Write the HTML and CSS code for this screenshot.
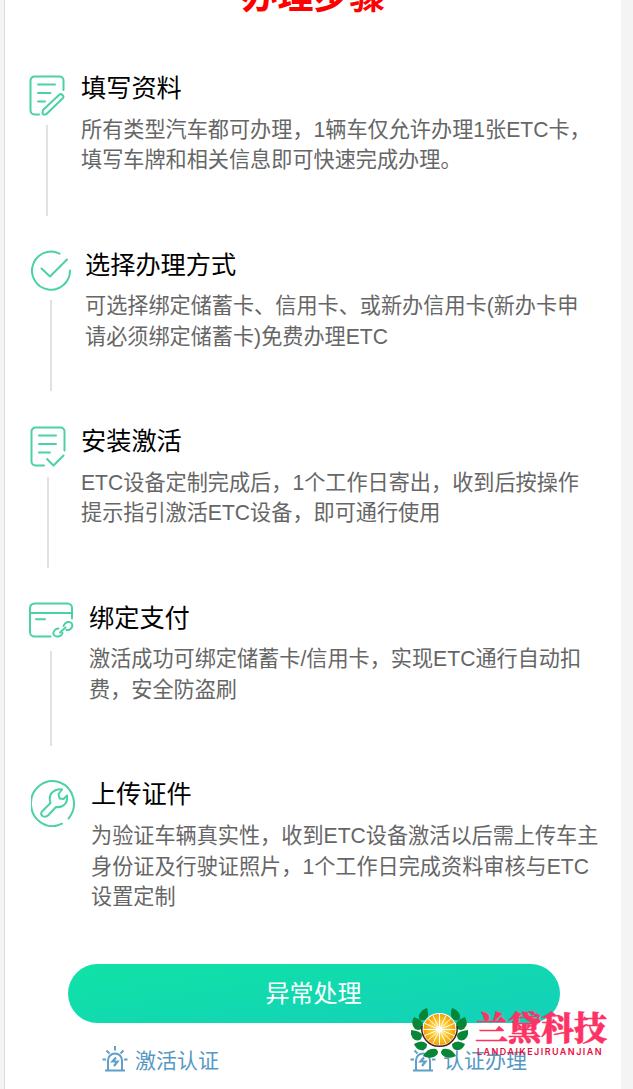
FILE: index.html
```html
<!DOCTYPE html>
<html lang="zh-CN">
<head>
<meta charset="utf-8">
<title>办理步骤</title>
<link rel="stylesheet" href="styles.css">
</head>
<body>
<main class="page">
  <h1 class="heading">办理步骤</h1>
  <section class="steps">
    <article class="step">
      <div class="marker marker-form">
        <svg class="icon" width="36" height="42" viewBox="0 0 36 42"><path d="M34.500 15V5.500a4 4 0 0 0-4-4h-25a4 4 0 0 0-4 4v30a4 4 0 0 0 4 4H10M9 9.500h17M9 18h12.500M9 26.500h7M14 35 30.500 19.500q1.500-1 3 .5t.5 3L17.500 39q-4 1.500-4-1z"/></svg>
        <span class="line"></span>
      </div>
      <div class="copy"><h2 class="title">填写资料</h2><p class="desc">所有类型汽车都可办理，1辆车仅允许办理1张ETC卡，<br>填写车牌和相关信息即可快速完成办理。</p></div>
    </article>
    <article class="step">
      <div class="marker marker-check">
        <svg class="icon" width="40" height="42" viewBox="0 0 40 42"><path d="M28.500 3.700A19 19 0 1 0 39 20.500M10.500 18.500l8.500 8 17-17"/></svg>
        <span class="line"></span>
      </div>
      <div class="copy"><h2 class="title">选择办理方式</h2><p class="desc">可选择绑定储蓄卡、信用卡、或新办信用卡(新办卡申<br>请必须绑定储蓄卡)免费办理ETC</p></div>
    </article>
    <article class="step">
      <div class="marker marker-done">
        <svg class="icon" width="36" height="42" viewBox="0 0 36 42"><path d="M34.500 24.500v-19a4 4 0 0 0-4-4h-25a4 4 0 0 0-4 4v30a4 4 0 0 0 4 4H14M9 9.500h17M9 18h17M9 26.500h11M17 33l6.500 6.500L33.500 29.500"/></svg>
        <span class="line"></span>
      </div>
      <div class="copy"><h2 class="title">安装激活</h2><p class="desc">ETC设备定制完成后，1个工作日寄出，收到后按操作<br>提示指引激活ETC设备，即可通行使用</p></div>
    </article>
    <article class="step">
      <div class="marker marker-card">
        <svg class="icon" width="46" height="38" viewBox="0 0 46 38"><path d="M44 16.500V6a4.500 4.500 0 0 0-4.500-4.500h-33A4.500 4.500 0 0 0 2 6v24A4.500 4.500 0 0 0 6.500 34.500H22.500M2 11h42M8 17.300h9M30.500 26.500q-2.500 0-4 2-2 2.500-.5 4.500t4.500 1.500q3-.500 4-3.500M35.500 24q1-3 4-4 3.500-.500 4.500 2t-1 4.500q-2 2-4.500 1.500M32 30.500l5.500-5"/></svg>
        <span class="line"></span>
      </div>
      <div class="copy"><h2 class="title">绑定支付</h2><p class="desc">激活成功可绑定储蓄卡/信用卡，实现ETC通行自动扣<br>费，安全防盗刷</p></div>
    </article>
    <article class="step">
      <div class="marker marker-tool">
        <svg class="icon" width="46" height="48" viewBox="0 0 46 48"><path d="M31 44.700A21.500 22.500 0 1 1 37.500 39.500M11 32.500 19.500 24Q16.500 14.500 25 11q3.500-1.200 6-.500L27.500 15l1 4.500 4 .5 3.500-3.500q1 7.500-4.500 10.500-3 1.500-6.500 1L17.500 36q-3 3-6 1-2.500-2-.500-4.500"/></svg>
      </div>
      <div class="copy"><h2 class="title">上传证件</h2><p class="desc">为验证车辆真实性，收到ETC设备激活以后需上传车主<br>身份证及行驶证照片，1个工作日完成资料审核与ETC<br>设置定制</p></div>
    </article>
  </section>
  <button class="action">异常处理</button>
  <nav class="links">
    <a class="link"><svg class="siren" width="26" height="26" viewBox="0 0 26 26"><path d="M3 24.500h20M6 24V14.500a7 7 0 0 1 14 0V24M13 0v4.500M4.500 4.500l3 3M21.500 4.500l-3 3M.5 13.500H4M22 13.500h3.500"/><path class="bolt" d="M14 11.500l-3.500 4h5L12 20"/></svg>激活认证</a>
    <a class="link"><svg class="siren" width="26" height="26" viewBox="0 0 26 26"><path d="M3 24.500h20M6 24V14.500a7 7 0 0 1 14 0V24M13 0v4.500M4.500 4.500l3 3M21.500 4.500l-3 3M.5 13.500H4M22 13.500h3.500"/><path class="bolt" d="M14 11.500l-3.500 4h5L12 20"/></svg>认证办理</a>
  </nav>
</main>
<aside class="brand">
  <svg class="emblem" width="58" height="52" viewBox="0 0 58 52">
    <defs>
      <radialGradient id="pulp"><stop offset="0" stop-color="#ffe36b"/><stop offset=".6" stop-color="#fdc52c"/><stop offset="1" stop-color="#f2a000"/></radialGradient>
      <g id="leaves" fill="#078637"><path d="M16 1q3 9-2 12-7 2-6-5 2-5 8-7z"/><path d="M3 10q9 3 9 8-1 7-8 4-5-5-1-12z"/><path d="M0 23q10 1 11 5 0 7-7 5-5-3-4-10z"/><path d="M3 37q8-5 13 0 0 7-7 6-4-1-6-6z"/><path d="M12 49q5-9 13-7 5 4-2 8-6 2-11-1z"/></g>
    </defs>
    <use href="#leaves"/><use href="#leaves" transform="matrix(-1 0 0 1 57 0)"/>
    <circle cx="28.500" cy="23.500" r="17.500" fill="#fff"/>
    <path d="M11 19a17.700 17.700 0 1 0 35 0" fill="none" stroke="#482113" stroke-width="1.500"/>
    <ellipse cx="28.500" cy="22.500" rx="16" ry="15.500" fill="url(#pulp)"/>
    <path d="M28.500 7v31M12.500 22.500h32M17 11.500l23 22M40 11.500l-23 22M22 8.500l13 28M35 8.500l-13 28M14 16.500l29 12M43 16.500l-29 12" stroke="#fff" stroke-width="1"/>
    <circle cx="28.500" cy="22.500" r="3" fill="#fff"/>
  </svg>
  <div class="brand-copy"><strong class="brand-name">兰黛科技</strong><span class="brand-latin">LANDAIKEJIRUANJIAN</span></div>
</aside>
</body>
</html>
```
FILE: styles.css
```css
* { box-sizing: border-box; }
body {
  margin: 0;
  height: 1089px;
  overflow: hidden;
  background: #f4f4f4;
  font-family: "Liberation Sans", "Noto Sans CJK SC", sans-serif;
}
.page {
  width: 617px;
  height: 1089px;
  margin-left: 4px;
  border-left: 1px solid #ddd;
  background: #fff;
  overflow: hidden;
}
.heading {
  margin: -29px 0 0 1px;
  height: 101px;
  color: #f00;
  font-size: 36px;
  line-height: 52px;
  text-align: center;
}
.step { display: flex; height: 176.6px; }
.marker {
  flex: none;
  display: flex;
  flex-direction: column;
  align-items: center;
}
.marker-form { width: 76px; padding: 3px 0 0 8px; }
.marker-check { width: 80px; padding: 1px 0 0 12px; }
.marker-done { width: 76px; padding: 1px 0 0 10px; }
.marker-card { width: 84px; padding-left: 7px; }
.marker-tool { width: 86px; padding: 1px 0 0 11px; }
.marker-form, .marker-check, .marker-done { padding-right: 0; }
.icon { display: block; flex: none; fill: none; stroke: #4bd2a3; stroke-width: 2; stroke-linecap: round; stroke-linejoin: round; }
.line { width: 2px; height: 91px; margin-top: 8px; background: #e1e1e1; }
.marker-done .line { margin-top: 9px; }
.marker-card .line { height: 95px; margin-top: 11px; }
.copy { white-space: nowrap; }
.title { margin: 0; color: #000; font-size: 25.2px; line-height: 32px; font-weight: 400; }
.desc { margin: 10.700px 0 0; color: #666; font-size: 21.150px; line-height: 30.600px; }
.action {
  display: block;
  width: 492px;
  height: 59px;
  margin: 9.500px 0 0 62.500px;
  padding: 0;
  border: 0;
  border-radius: 30px;
  background: linear-gradient(170deg, #10e2a5, #13d0ba);
  color: #fff;
  font: 24px/59px "Liberation Sans", "Noto Sans CJK SC", sans-serif;
}
.links { display: flex; gap: 191px; padding: 21px 0 0 97px; }
.link { display: flex; align-items: center; gap: 7px; height: 30px; color: #5698c3; font-size: 21px; white-space: nowrap; }
.siren { flex: none; fill: none; stroke: #5f9fc8; stroke-width: 2; }
.bolt { stroke-width: 2.200; }
.brand { position: absolute; left: 411px; top: 1007px; display: flex; gap: 6px; }
.brand-copy { padding-top: 0; white-space: nowrap; }
.brand-name { display: block; color: #fd3265; font: 900 33px/38px "Noto Serif CJK SC", "Noto Sans CJK SC", serif; -webkit-text-stroke: .5px #fd3265; }
.brand-latin { display: block; margin: 1px 0 0 2px; color: #e6103c; font: 600 9px/12px Inter, "Liberation Sans", sans-serif; letter-spacing: 1.450px; }
```
